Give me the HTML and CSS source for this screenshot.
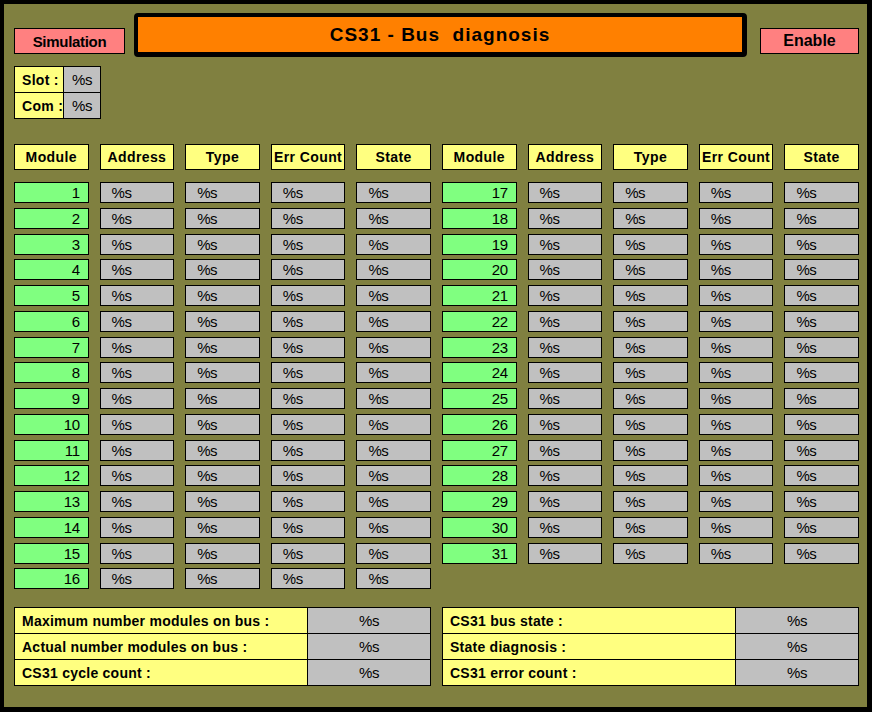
FILE: index.html
```html
<!DOCTYPE html>
<html>
<head>
<meta charset="utf-8">
<link rel="stylesheet" href="styles.css">
</head>
<body>
<div class="screen">
  <div class="top">
    <div class="btn sim">Simulation</div>
    <div class="title">CS31 - Bus  diagnosis</div>
    <div class="btn enable">Enable</div>
  </div>
  <div class="slot">
    <div class="lbl">Slot :</div><div class="sval">%s</div>
    <div class="lbl">Com :</div><div class="sval">%s</div>
  </div>
  <div class="grid heads">
    <div class="head">Module</div><div class="head">Address</div><div class="head">Type</div><div class="head">Err Count</div><div class="head">State</div>
    <div class="head">Module</div><div class="head">Address</div><div class="head">Type</div><div class="head">Err Count</div><div class="head">State</div>
  </div>
  <div class="grid data">
    <div class="cell num">1</div><div class="cell val">%s</div><div class="cell val">%s</div><div class="cell val">%s</div><div class="cell val">%s</div>
    <div class="cell num">17</div><div class="cell val">%s</div><div class="cell val">%s</div><div class="cell val">%s</div><div class="cell val">%s</div>
    <div class="cell num">2</div><div class="cell val">%s</div><div class="cell val">%s</div><div class="cell val">%s</div><div class="cell val">%s</div>
    <div class="cell num">18</div><div class="cell val">%s</div><div class="cell val">%s</div><div class="cell val">%s</div><div class="cell val">%s</div>
    <div class="cell num">3</div><div class="cell val">%s</div><div class="cell val">%s</div><div class="cell val">%s</div><div class="cell val">%s</div>
    <div class="cell num">19</div><div class="cell val">%s</div><div class="cell val">%s</div><div class="cell val">%s</div><div class="cell val">%s</div>
    <div class="cell num">4</div><div class="cell val">%s</div><div class="cell val">%s</div><div class="cell val">%s</div><div class="cell val">%s</div>
    <div class="cell num">20</div><div class="cell val">%s</div><div class="cell val">%s</div><div class="cell val">%s</div><div class="cell val">%s</div>
    <div class="cell num">5</div><div class="cell val">%s</div><div class="cell val">%s</div><div class="cell val">%s</div><div class="cell val">%s</div>
    <div class="cell num">21</div><div class="cell val">%s</div><div class="cell val">%s</div><div class="cell val">%s</div><div class="cell val">%s</div>
    <div class="cell num">6</div><div class="cell val">%s</div><div class="cell val">%s</div><div class="cell val">%s</div><div class="cell val">%s</div>
    <div class="cell num">22</div><div class="cell val">%s</div><div class="cell val">%s</div><div class="cell val">%s</div><div class="cell val">%s</div>
    <div class="cell num">7</div><div class="cell val">%s</div><div class="cell val">%s</div><div class="cell val">%s</div><div class="cell val">%s</div>
    <div class="cell num">23</div><div class="cell val">%s</div><div class="cell val">%s</div><div class="cell val">%s</div><div class="cell val">%s</div>
    <div class="cell num">8</div><div class="cell val">%s</div><div class="cell val">%s</div><div class="cell val">%s</div><div class="cell val">%s</div>
    <div class="cell num">24</div><div class="cell val">%s</div><div class="cell val">%s</div><div class="cell val">%s</div><div class="cell val">%s</div>
    <div class="cell num">9</div><div class="cell val">%s</div><div class="cell val">%s</div><div class="cell val">%s</div><div class="cell val">%s</div>
    <div class="cell num">25</div><div class="cell val">%s</div><div class="cell val">%s</div><div class="cell val">%s</div><div class="cell val">%s</div>
    <div class="cell num">10</div><div class="cell val">%s</div><div class="cell val">%s</div><div class="cell val">%s</div><div class="cell val">%s</div>
    <div class="cell num">26</div><div class="cell val">%s</div><div class="cell val">%s</div><div class="cell val">%s</div><div class="cell val">%s</div>
    <div class="cell num">11</div><div class="cell val">%s</div><div class="cell val">%s</div><div class="cell val">%s</div><div class="cell val">%s</div>
    <div class="cell num">27</div><div class="cell val">%s</div><div class="cell val">%s</div><div class="cell val">%s</div><div class="cell val">%s</div>
    <div class="cell num">12</div><div class="cell val">%s</div><div class="cell val">%s</div><div class="cell val">%s</div><div class="cell val">%s</div>
    <div class="cell num">28</div><div class="cell val">%s</div><div class="cell val">%s</div><div class="cell val">%s</div><div class="cell val">%s</div>
    <div class="cell num">13</div><div class="cell val">%s</div><div class="cell val">%s</div><div class="cell val">%s</div><div class="cell val">%s</div>
    <div class="cell num">29</div><div class="cell val">%s</div><div class="cell val">%s</div><div class="cell val">%s</div><div class="cell val">%s</div>
    <div class="cell num">14</div><div class="cell val">%s</div><div class="cell val">%s</div><div class="cell val">%s</div><div class="cell val">%s</div>
    <div class="cell num">30</div><div class="cell val">%s</div><div class="cell val">%s</div><div class="cell val">%s</div><div class="cell val">%s</div>
    <div class="cell num">15</div><div class="cell val">%s</div><div class="cell val">%s</div><div class="cell val">%s</div><div class="cell val">%s</div>
    <div class="cell num">31</div><div class="cell val">%s</div><div class="cell val">%s</div><div class="cell val">%s</div><div class="cell val">%s</div>
    <div class="cell num">16</div><div class="cell val">%s</div><div class="cell val">%s</div><div class="cell val">%s</div><div class="cell val">%s</div>
  </div>
  <div class="grid bottom">
    <div class="panel">
      <div class="plbl">Maximum number modules on bus :</div><div class="pval">%s</div>
      <div class="plbl">Actual number modules on bus :</div><div class="pval">%s</div>
      <div class="plbl">CS31 cycle count :</div><div class="pval">%s</div>
    </div>
    <div class="panel">
      <div class="plbl">CS31 bus state :</div><div class="pval">%s</div>
      <div class="plbl">State diagnosis :</div><div class="pval">%s</div>
      <div class="plbl">CS31 error count :</div><div class="pval">%s</div>
    </div>
  </div>
</div>
</body>
</html>
```

FILE: styles.css
```css
html, body {
  margin: 0;
  padding: 0;
  background: #000;
}
.screen {
  box-sizing: border-box;
  width: 872px;
  height: 712px;
  background: #808040;
  border-style: solid;
  border-color: #000;
  border-width: 4px 5px 5px 4px;
  padding: 9px 8px 0 10px;
  font-family: "Liberation Sans", Arial, sans-serif;
  color: #000;
}
.top {
  display: flex;
  align-items: flex-start;
  height: 44px;
}
.btn {
  box-sizing: border-box;
  height: 26px;
  margin-top: 15px;
  background: #ff8080;
  border: 1px solid #000;
  display: flex;
  align-items: center;
  justify-content: center;
  font-weight: bold;
}
.sim {
  width: 111px;
  font-size: 15px;
  letter-spacing: -0.3px;
}
.enable {
  width: 99px;
  margin-left: 13px;
  font-size: 16px;
}
.title {
  box-sizing: border-box;
  width: 613px;
  height: 44px;
  margin-left: 9px;
  background: #ff8000;
  border: 4px solid #000;
  border-width: 4px 5px 5px 4px;
  border-radius: 4px;
  display: flex;
  align-items: center;
  justify-content: center;
  font-size: 19px;
  font-weight: bold;
  letter-spacing: 1px;
  white-space: pre;
}
.slot {
  margin-top: 9px;
  width: 87px;
  box-sizing: border-box;
  display: grid;
  grid-template-columns: 48px 36px;
  grid-auto-rows: 25px;
  gap: 1px;
  padding: 1px;
  background: #000;
}
.lbl {
  background: #ffff80;
  font-weight: bold;
  font-size: 14px;
  letter-spacing: 0.3px;
  display: flex;
  align-items: center;
  padding-left: 7px;
  white-space: nowrap;
  overflow: hidden;
}
.sval {
  background: #c0c0c0;
  font-size: 15px;
  letter-spacing: -0.4px;
  display: flex;
  align-items: center;
  justify-content: center;
}
.grid {
  display: grid;
  grid-template-columns: repeat(10, 1fr);
  column-gap: 11px;
}
.heads {
  margin-top: 25px;
}
.head {
  box-sizing: border-box;
  height: 26px;
  background: #ffff80;
  border: 1px solid #000;
  display: flex;
  align-items: center;
  justify-content: center;
  font-weight: bold;
  font-size: 14px;
  letter-spacing: 0.4px;
  white-space: nowrap;
}
.data {
  margin-top: 12px;
  grid-auto-rows: 21px;
  row-gap: 4.75px;
}
.cell {
  box-sizing: border-box;
  border: 1px solid #000;
  display: flex;
  align-items: center;
  font-size: 15px;
  letter-spacing: -0.4px;
}
.num {
  background: #80ff80;
  justify-content: flex-end;
  padding-right: 8px;
}
.val {
  background: #c0c0c0;
  padding-left: 11px;
}
.bottom {
  margin-top: 18px;
}
.panel {
  grid-column: span 5;
  display: grid;
  grid-template-columns: 1fr 122px;
  grid-auto-rows: 25px;
  gap: 1px;
  padding: 1px;
  background: #000;
}
.plbl {
  background: #ffff80;
  font-weight: bold;
  font-size: 14px;
  letter-spacing: 0.25px;
  display: flex;
  align-items: center;
  padding-left: 7px;
  white-space: nowrap;
}
.pval {
  background: #c0c0c0;
  font-size: 15px;
  letter-spacing: -0.4px;
  display: flex;
  align-items: center;
  justify-content: center;
}
```
